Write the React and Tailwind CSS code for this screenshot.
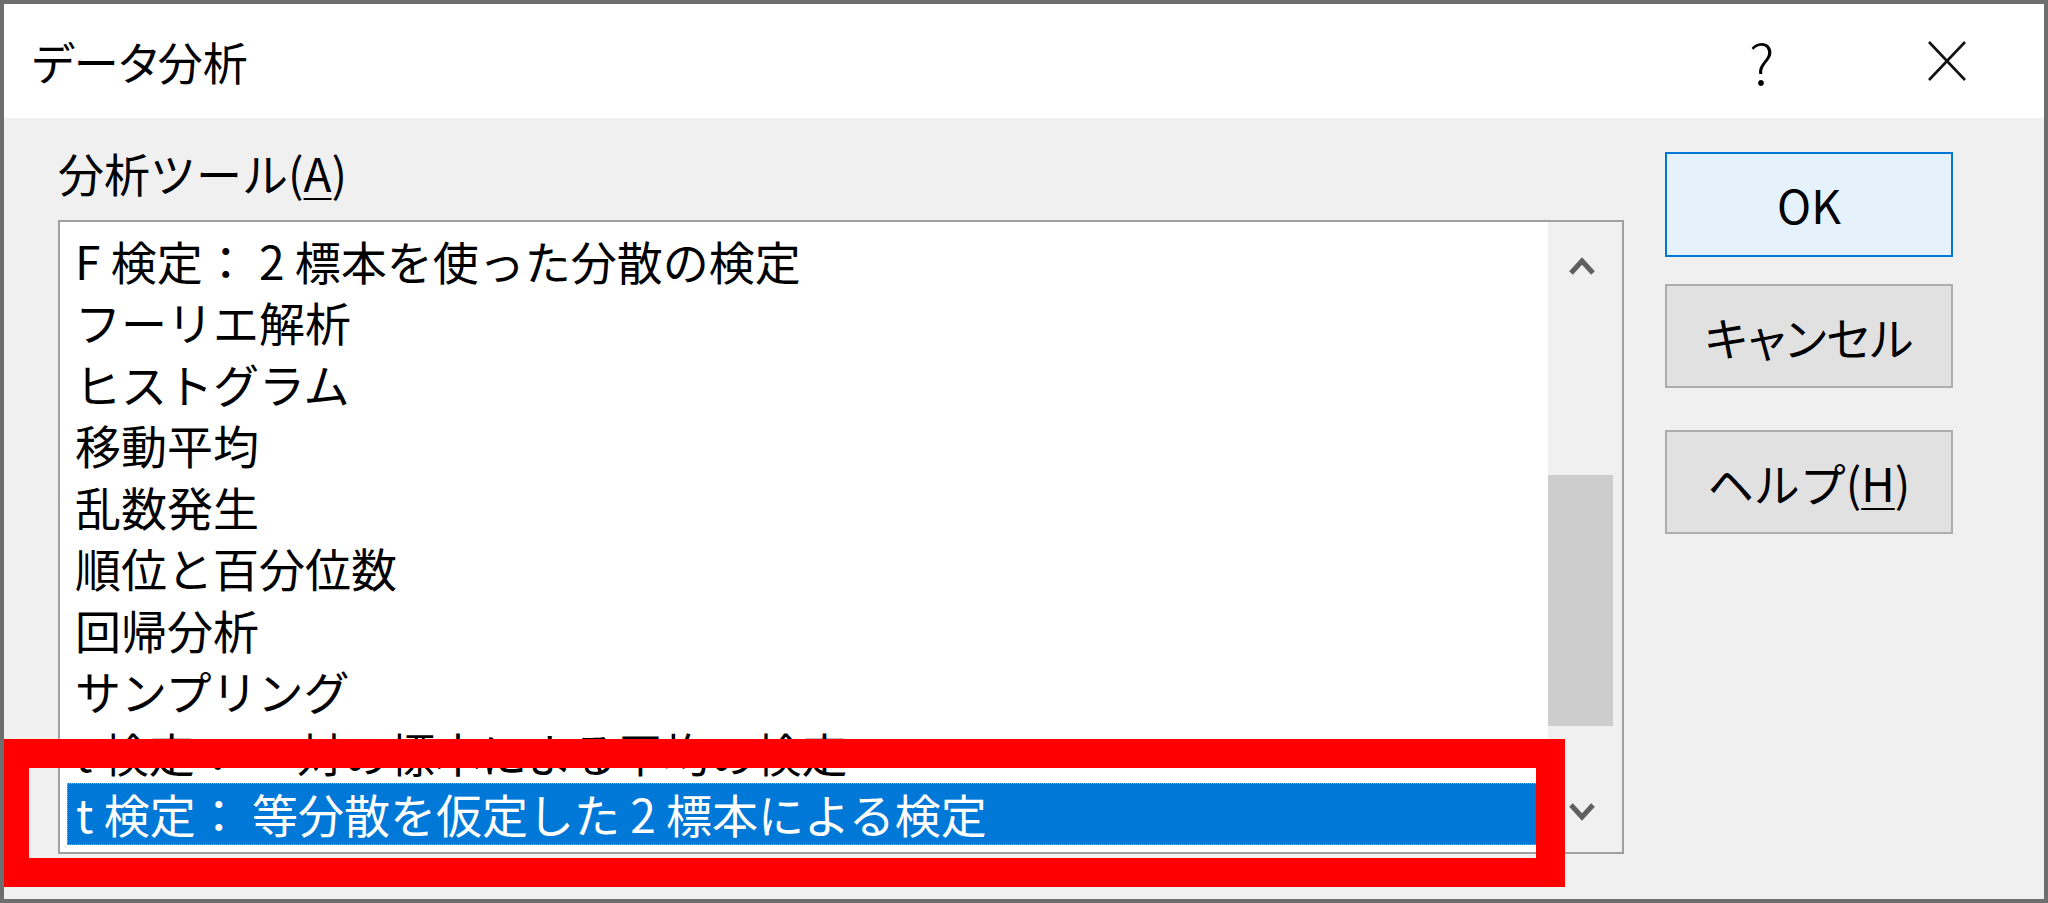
const items = [
  'F 検定： 2 標本を使った分散の検定',
  'フーリエ解析',
  'ヒストグラム',
  '移動平均',
  '乱数発生',
  '順位と百分位数',
  '回帰分析',
  'サンプリング',
  't 検定： 一対の標本による平均の検定',
  't 検定： 等分散を仮定した 2 標本による検定',
];

function Chevron({ down }) {
  return (
    <svg width="26" height="22" viewBox="0 0 26 22">
      <polyline
        points={down ? '2,5 13,17 24,5' : '2,17 13,5 24,17'}
        fill="none"
        stroke="#5f5f5f"
        strokeWidth="5"
      />
    </svg>
  );
}

function Button({ children, primary, className }) {
  return (
    <div
      className={
        'w-[288px] h-[104px] flex items-center justify-center text-[46px] text-black border-2 ' +
        (primary ? 'border-[#0078d7] bg-[#e5f1fb] h-[105px] ' : 'border-[#adadad] bg-[#e1e1e1] ') +
        (className || '')
      }
    >
      {children}
    </div>
  );
}

export default function App() {
  const selected = items.length - 1;

  return (
    <div className="relative w-[2048px] h-[903px] overflow-hidden flex flex-col border-4 border-[#6e6e6e] bg-[#f0f0f0] text-black font-['Noto_Sans_CJK_JP','Noto_Sans',sans-serif]">
      {/* title bar */}
      <div className="h-[114px] shrink-0 bg-white flex items-center pl-[28px] pr-[77px]">
        <span className="text-[45px] leading-none [font-feature-settings:'palt']">データ分析</span>
        <div className="ml-auto flex items-center">
          <span className="w-[60px] text-center text-[56px] leading-none font-light">?</span>
          <svg className="ml-[135px]" width="40" height="42" viewBox="0 0 40 42">
            <path d="M2 2 L38 40 M38 2 L2 40" stroke="#111" strokeWidth="2.6" fill="none" />
          </svg>
        </div>
      </div>

      {/* body */}
      <div className="flex flex-1 pl-[54px]">
        <div className="w-[1566px] flex flex-col">
          <div className="h-[62px] mt-[23px] flex items-center text-[46px]">
            分析ツール(<span className="underline decoration-2 underline-offset-[6px]">A</span>)
          </div>

          <div className="mt-[17px] h-[634px] border-2 border-[#a0a0a0] bg-white flex">
            <div className="flex-1 pt-[7.5px] pl-[7px] pr-[2px] overflow-hidden">
              {items.map((t, i) => (
                <div
                  key={t}
                  className={
                    'h-[61.5px] flex items-center pl-[8px] text-[46px] whitespace-nowrap ' +
                    (i === selected
                      ? 'bg-[#0078d7] text-white border border-dotted border-[#f09a3a]'
                      : '')
                  }
                >
                  {t}
                </div>
              ))}
            </div>

            {/* scrollbar */}
            <div className="w-[74px] bg-[#f0f0f0] flex flex-col">
              <div className="w-[68px] h-[90px] flex items-center justify-center">
                <Chevron />
              </div>
              <div className="mt-[163px] w-[65px] h-[251px] bg-[#cdcdcd]" />
              <div className="flex-1" />
              <div className="w-[68px] h-[82px] flex items-center justify-center">
                <Chevron down />
              </div>
            </div>
          </div>
        </div>

        <div className="ml-[41px] pt-[34px] flex flex-col">
          <Button primary>OK</Button>
          <Button className="mt-[27px] [font-feature-settings:'palt']">キャンセル</Button>
          <Button className="mt-[42px]">
            ヘルプ(<span className="underline decoration-2 underline-offset-[6px]">H</span>)
          </Button>
        </div>
      </div>

      {/* red annotation box */}
      <div className="absolute left-[-4px] top-[735px] w-[1565px] h-[148px] border-[29px] border-[#ff0000] pointer-events-none" />
    </div>
  );
}
